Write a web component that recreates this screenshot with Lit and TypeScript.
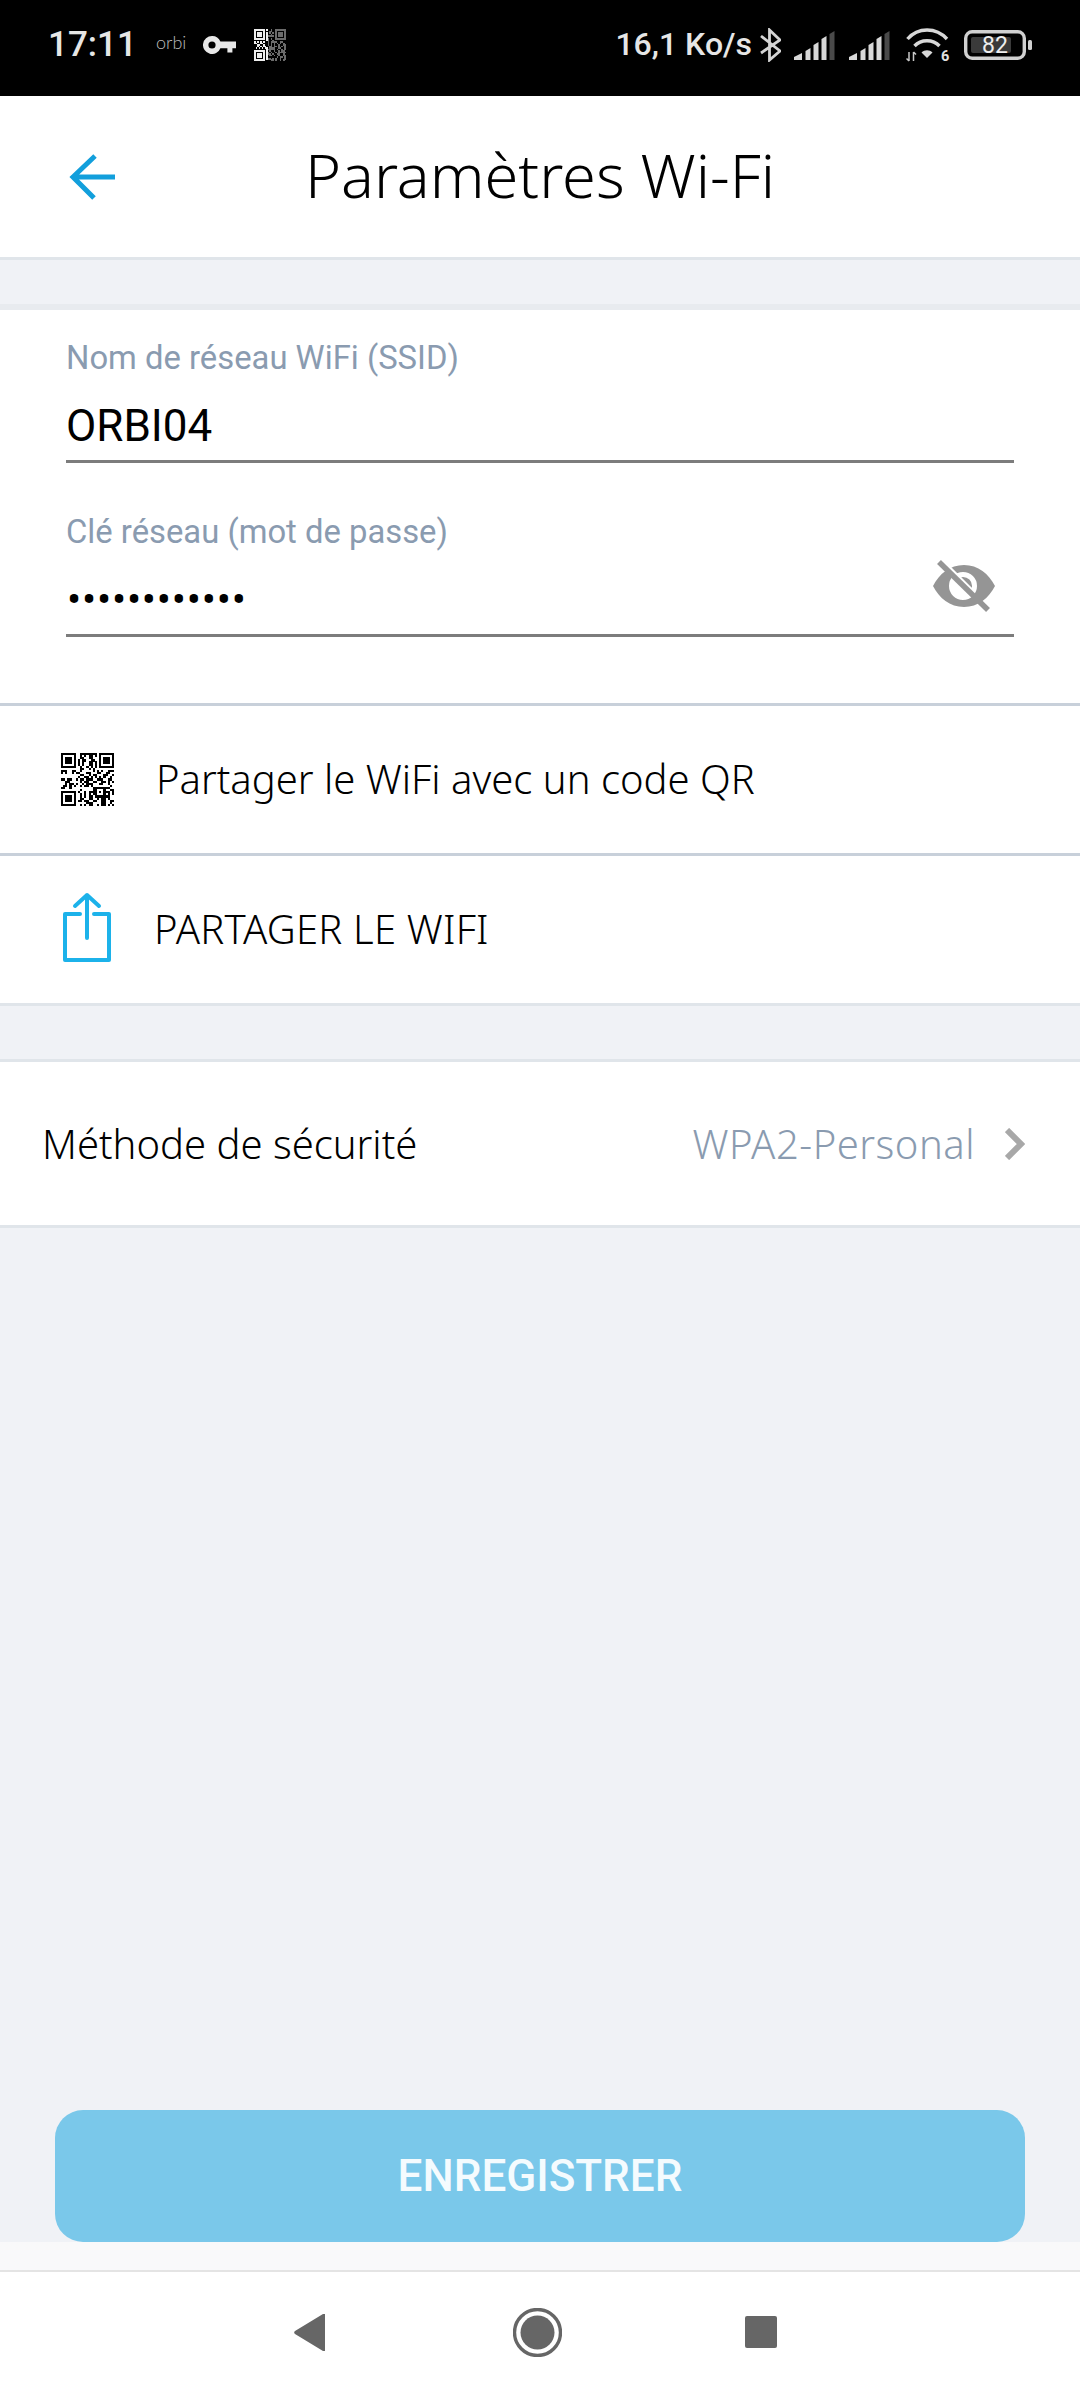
import { LitElement, html, css, svg } from "lit";
import { customElement } from "lit/decorators.js";

function buildQr(n: number, seed: number, align: boolean) {
  const g: number[][] = [];
  let s = seed;
  const rnd = () => {
    s = (s * 1103515245 + 12345) & 0x7fffffff;
    return (s >> 12) & 1;
  };
  for (let y = 0; y < n; y++) {
    g.push([]);
    for (let x = 0; x < n; x++) g[y].push(rnd());
  }
  const finder = (ox: number, oy: number) => {
    for (let y = -1; y <= 7; y++)
      for (let x = -1; x <= 7; x++) {
        const X = ox + x, Y = oy + y;
        if (X < 0 || Y < 0 || X >= n || Y >= n) continue;
        const edge = x === 0 || y === 0 || x === 6 || y === 6;
        const core = x >= 2 && x <= 4 && y >= 2 && y <= 4;
        const inside = x >= 0 && x <= 6 && y >= 0 && y <= 6;
        g[Y][X] = inside && (edge || core) ? 1 : 0;
      }
  };
  finder(0, 0);
  finder(n - 7, 0);
  finder(0, n - 7);
  if (align) {
    const c = n - 7;
    for (let y = -2; y <= 2; y++)
      for (let x = -2; x <= 2; x++)
        g[c + y][c + x] = Math.max(Math.abs(x), Math.abs(y)) !== 1 ? 1 : 0;
  }
  return g;
}

function qr(n: number, seed: number, align: boolean) {
  const g = buildQr(n, seed, align);
  return svg`<g fill="currentColor">${g.flatMap((r, y) =>
    r.map((c, x) => (c ? svg`<rect x=${x} y=${y} width="1.02" height="1.02"/>` : null)))}</g>`;
}

function bars() {
  return svg`
    <path fill="#d8d8d8" d="M0 29v-3l8-4v7z"/>
    <path fill="#d8d8d8" d="M11.5 29V20l5-3v12z"/>
    <path fill="#d8d8d8" d="M19.5 29V14l5-3v18z"/>
    <path fill="#d8d8d8" d="M27.5 29V8l5-3v24z"/>
    <path fill="#4a4a4a" d="M35.5 29V3l5-3v29z"/>`;
}

@customElement("app-root")
export class AppRoot extends LitElement {
  static styles = css`
    :host { display: block; width: 1080px; height: 2400px; font-family: "Roboto", sans-serif; }
    .page { height: 2400px; display: flex; flex-direction: column; background: #f0f2f6; }
    .status { height: 96px; flex: none; background: #000; color: #e6e6e6; display: flex; align-items: center; padding: 0 48px 6px 48px; box-sizing: border-box; white-space: nowrap; line-height: 1.3; }
    .status svg { display: block; flex: none; }
    .time { font-size: 35px; font-weight: 500; width: 108px; }
    .orbi { font-family: "Lato", sans-serif; font-weight: 300; font-size: 18px; width: 47px; margin-top: -4px; color: #bbb; }
    .key { margin-right: 17px; }
    .sqr { color: #eee; }
    .spacer { flex: 1; }
    .speed { font-size: 32px; font-weight: 500; margin-right: 8px; }
    .bt { margin-right: 13px; }
    .sig { margin-right: 14px; }
    .wifi { margin-left: 2px; margin-right: 14px; }
    .header { height: 161px; flex: none; background: #fff; border-bottom: 3px solid #e0e5ea; display: flex; align-items: center; position: relative; justify-content: center; }
    .back { position: absolute; left: 68px; top: 57px; }
    .title { font-family: "Noto Sans", sans-serif; font-weight: 300; font-size: 61.3px; color: #000; margin-top: -5px; }
    .fields { margin-top: 44px; background: #fff; border-top: 6px solid #e8ebef; padding: 0 66px; height: 399px; box-sizing: border-box; flex: none; }
    .label { font-size: 32.8px; color: #8a9bb0; line-height: 40px; }
    .f1 { padding-top: 28px; }
    .f2 { padding-top: 49px; }
    .val { height: 82px; border-bottom: 3px solid #7c7c7c; display: flex; align-items: center; justify-content: space-between; font-size: 44px; color: #000; }
    .v1 { height: 68px; padding-top: 14px; }
    .dots { font-size: 42px; letter-spacing: .8px; margin-left: 1px; margin-top: 12px; }
    .eye { margin-right: 19px; margin-bottom: 14px; }
    .row { height: 147px; flex: none; background: #fff; border-top: 3px solid #c8d0da; display: flex; align-items: center; font-family: "Noto Sans", sans-serif; font-weight: 300; font-size: 40px; color: #000; }
    .row svg { display: block; flex: none; }
    .row span { margin-bottom: 3px; }
    .row.last { border-bottom: 3px solid #e0e5ea; }
    .row.last span { letter-spacing: .2px; }
    .qric { margin-left: 61px; margin-right: 42px; color: #000; }
    .shic { margin-left: 63px; margin-right: 43px; margin-bottom: 5px; }
    .sec { margin-top: 53px; height: 169px; box-sizing: border-box; flex: none; background: #fff; border-top: 3px solid #e0e5ea; border-bottom: 3px solid #e0e5ea; display: flex; align-items: center; padding: 0 55px 0 42px; font-family: "Noto Sans", sans-serif; font-weight: 300; font-size: 40px; }
    .sec .name { flex: 1; color: #000; }
    .sec .value { color: #8a9bb0; margin-right: 30px; letter-spacing: .5px; }
    .main { flex: 1; display: flex; flex-direction: column; justify-content: flex-end; }
    .btn { margin: 0 55px; height: 132px; border-radius: 28px; background: #7ac8ea; color: #f4fbfe; display: flex; align-items: center; justify-content: center; font-size: 44px; font-weight: 500; }
    .strip { height: 28px; flex: none; background: #f9f9fa; border-bottom: 2px solid #e4e4e4; }
    .nav { height: 128px; box-sizing: border-box; padding: 0 9px 8px 0; flex: none; background: #fff; display: flex; align-items: center; justify-content: center; }
    .nav svg { display: block; }
    .n1 { margin-right: 188px; }
    .n3 { margin-left: 183px; }
  `;

  render() {
    return html`<div class="page">
      <div class="status">
        <span class="time">17:11</span>
        <span class="orbi">orbi</span>
        <svg class="key" width="34" height="18" viewBox="0 0 34 18"><path fill="#e8e8e8" fill-rule="evenodd" d="M9 0a9 9 0 0 1 8.4 5.6H33v6.6h-3.6v4.4h-5v-4.4h-7A9 9 0 1 1 9 0Zm0 5.4a3.6 3.6 0 1 0 0 7.2 3.6 3.6 0 0 0 0-7.2Z"/></svg>
        <svg class="sqr" width="32" height="32" viewBox="0 0 21 21" shape-rendering="crispEdges">${qr(21, 71, false)}<rect x="9.5" width="11.5" height="21" fill="#000" opacity=".55"/></svg>
        <span class="spacer"></span>
        <span class="speed">16,1 Ko/s</span>
        <svg class="bt" width="21" height="34" viewBox="0 0 21 34"><path fill="none" stroke="#d4d4d4" stroke-width="2.8" d="M1 8 20 23 9.5 32V2L20 12 1 25"/></svg>
        <svg class="sig" width="41" height="29" viewBox="0 0 41 29">${bars()}</svg>
        <svg class="sig" width="41" height="29" viewBox="0 0 41 29">${bars()}</svg>
        <svg class="wifi" width="44" height="34" viewBox="0 0 44 34">
          <g fill="none" stroke="#d8d8d8" stroke-width="3.4">
            <path d="M1.5 11C12 -1 30 -1 41 11"/><path d="M8.5 18C15 11 27 11 33.5 18"/>
          </g>
          <path fill="#d8d8d8" d="M15.5 24.5c3-3 8-3 11 0L21 30z"/>
          <path fill="none" stroke="#c8c8c8" stroke-width="1.5" d="M3 24v9M0.5 30.5 3 33M7.5 33v-9M7.5 24 10 26.5"/>
          <text x="35" y="33" font-family="Roboto" font-weight="700" font-size="14.5" fill="#e0e0e0">6</text>
        </svg>
        <svg width="68" height="30" viewBox="0 0 68 30">
          <rect x="1.7" y="1.7" width="58.6" height="26.6" rx="6.5" fill="none" stroke="#d0d0d0" stroke-width="3.4"/>
          <rect x="7" y="7" width="40" height="16" rx="2" fill="#3a3a3a"/>
          <rect x="64" y="10" width="4" height="10" rx="1.5" fill="#d0d0d0"/>
          <text x="31" y="23" text-anchor="middle" font-family="Roboto" font-size="23" fill="#eee">82</text>
        </svg>
      </div>
      <div class="header">
        <svg class="back" width="48" height="48" viewBox="0 0 48 48"><path fill="none" stroke="#129fdc" stroke-width="5" d="M47 24H4M27 3 5 24l21 21"/></svg>
        <div class="title">Paramètres Wi-Fi</div>
      </div>
      <div class="fields">
        <div class="f1"><div class="label">Nom de réseau WiFi (SSID)</div><div class="val v1">ORBI04</div></div>
        <div class="f2"><div class="label">Clé réseau (mot de passe)</div><div class="val"><span class="dots">••••••••••••</span>
          <svg class="eye" width="62" height="52" viewBox="0 0 62 52">
            <path fill="#959595" fill-rule="evenodd" d="M31 5c14 0 25 9 31 21-6 12-17 21-31 21S6 38 0 26C6 14 17 5 31 5Zm-1 7a14 14 0 1 0 0 28 14 14 0 0 0 0-28Z"/>
            <path fill="#959595" d="M23.6 19.6A9 9 0 1 1 36.4 32.4Z"/>
            <path stroke="#fff" stroke-width="3" d="M11 2 40 31"/>
            <path stroke="#959595" stroke-width="5.5" d="M6 2 55 50"/>
          </svg></div></div>
      </div>
      <div class="row"><svg class="qric" width="53" height="53" viewBox="0 0 25 25" shape-rendering="crispEdges">${qr(25, 4242, true)}</svg><span>Partager le WiFi avec un code QR</span></div>
      <div class="row last"><svg class="shic" width="48" height="70" viewBox="0 0 48 70"><path fill="none" stroke="#1cb2ea" stroke-width="4" stroke-linejoin="round" stroke-linecap="round" d="M17 22H2v46h44V22H31M24 46V3M12 14 24 3l12 11"/></svg><span>PARTAGER LE WIFI</span></div>
      <div class="sec">
        <span class="name">Méthode de sécurité</span>
        <span class="value">WPA2-Personal</span>
        <svg width="20" height="32" viewBox="0 0 20 32"><path fill="none" stroke="#a8a8a8" stroke-width="6" d="M2 2l14 14L2 30"/></svg>
      </div>
      <div class="main"><div class="btn">ENREGISTRER</div></div>
      <div class="strip"></div>
      <div class="nav">
        <svg class="n1" width="31" height="37" viewBox="0 0 31 37"><path fill="#666" d="M31 1v35a1 1 0 0 1-2 1L1 20a2 2 0 0 1 0-3L29 0a1 1 0 0 1 2 1Z"/></svg>
        <svg width="49" height="49" viewBox="0 0 49 49"><circle cx="24.5" cy="24.5" r="23" fill="none" stroke="#666" stroke-width="3.4"/><circle cx="24.5" cy="24.5" r="17" fill="#666"/></svg>
        <svg class="n3" width="32" height="32" viewBox="0 0 32 32"><rect width="32" height="32" rx="2" fill="#666"/></svg>
      </div>
    </div>`;
  }
}
